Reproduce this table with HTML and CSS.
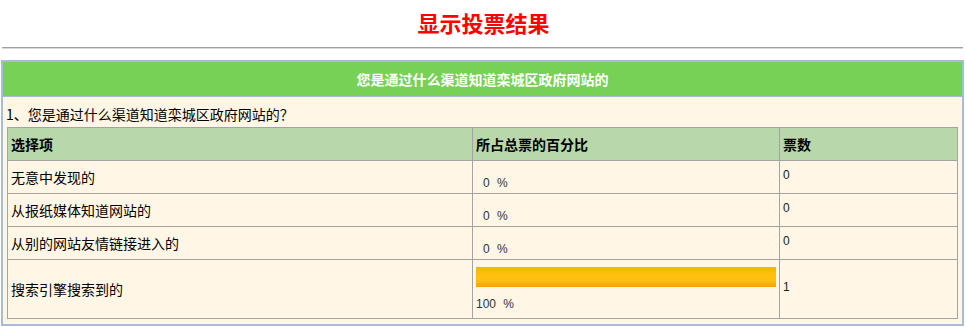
FILE: index.html
```html
<!DOCTYPE html>
<html lang="zh-CN">
<head>
<meta charset="utf-8">
<title>显示投票结果</title>
<link rel="stylesheet" href="styles.css">
</head>
<body>
<h1 class="page-title">显示投票结果</h1>
<div class="rule"></div>
<div class="panel">
  <div class="panel-head">您是通过什么渠道知道栾城区政府网站的</div>
  <div class="panel-body">
    <div class="question">1、您是通过什么渠道知道栾城区政府网站的？</div>
    <table class="result">
      <thead>
        <tr>
          <th class="col-opt">选择项</th>
          <th class="col-pct">所占总票的百分比</th>
          <th class="col-num">票数</th>
        </tr>
      </thead>
      <tbody>
        <tr>
          <td>无意中发现的</td>
          <td class="pct"><div class="spacer"></div><div class="pct-text pct-zero">0 %</div></td>
          <td class="num"><span class="num-text">0</span></td>
        </tr>
        <tr>
          <td>从报纸媒体知道网站的</td>
          <td class="pct"><div class="spacer"></div><div class="pct-text pct-zero">0 %</div></td>
          <td class="num"><span class="num-text">0</span></td>
        </tr>
        <tr>
          <td>从别的网站友情链接进入的</td>
          <td class="pct"><div class="spacer"></div><div class="pct-text pct-zero">0 %</div></td>
          <td class="num"><span class="num-text">0</span></td>
        </tr>
        <tr class="row-bar">
          <td>搜索引擎搜索到的</td>
          <td class="pct pct-bar"><div class="bar" style="width:300px"></div><div class="pct-text">100 %</div></td>
          <td class="num"><span class="num-text">1</span></td>
        </tr>
      </tbody>
    </table>
  </div>
</div>
</body>
</html>
```

FILE: styles.css
```css
html, body {
  margin: 0;
  padding: 0;
  background: #ffffff;
}

body {
  font-family: "Noto Sans CJK SC", "DejaVu Sans", sans-serif;
  font-size: 14px;
  color: #000;
}

.page-title {
  margin: 0;
  height: 44px;
  line-height: 44px;
  text-align: center;
  font-size: 22px;
  font-weight: bold;
  color: #f00;
}

.rule {
  margin: 3px 4px 0 2px;
  height: 0;
  border-top: 1px solid #a0a0a0;
  border-bottom: 1px solid #d8d8d8;
}

.panel {
  margin: 11px 3px 0 1px;
  border: 2px solid #a7bcd8;
}

.panel-head {
  height: 34px;
  line-height: 34px;
  background: #76d156;
  color: #fff;
  font-weight: bold;
  font-size: 14px;
  text-align: center;
  border-bottom: 1px solid #a7bcd8;
}

.panel-body {
  background: #fff6e6;
  padding: 8px 4px 5px 4px;
  border-top: 1px solid #fff6e6;
}

.question {
  line-height: 16px;
  height: 16px;
  margin: 0 0 5px -1px;
  white-space: nowrap;
}

.result {
  width: 100%;
  border-collapse: collapse;
  border: 1px solid #a3a3a3;
}

.result th,
.result td {
  border: 1px solid #a3a3a3;
  padding: 0 3px;
  text-align: left;
  vertical-align: middle;
  height: 32px;
  line-height: 16px;
}

.result th {
  background: #b8d7aa;
  font-weight: bold;
}

.col-opt { width: 458px; }
.col-pct { width: 300px; }

.spacer {
  height: 11px;
}

.pct-text {
  font-family: "Liberation Sans", "DejaVu Sans", sans-serif;
  font-size: 12px;
  line-height: 16px;
  color: #333;
  word-spacing: 4px;
}

.pct-zero {
  padding-left: 7px;
}

.num {
  font-family: "Liberation Sans", "DejaVu Sans", sans-serif;
  font-size: 12px;
  color: #222;
}

.num-text {
  position: relative;
  top: -2px;
}

.row-bar td {
  height: 58px;
}

.pct-bar {
  padding-bottom: 5px;
}

.bar {
  height: 20px;
  margin-bottom: 9px;
  background: linear-gradient(to bottom, #f8b400 0%, #ffc20e 45%, #ffbf0c 70%, #f3a004 100%);
}
```
